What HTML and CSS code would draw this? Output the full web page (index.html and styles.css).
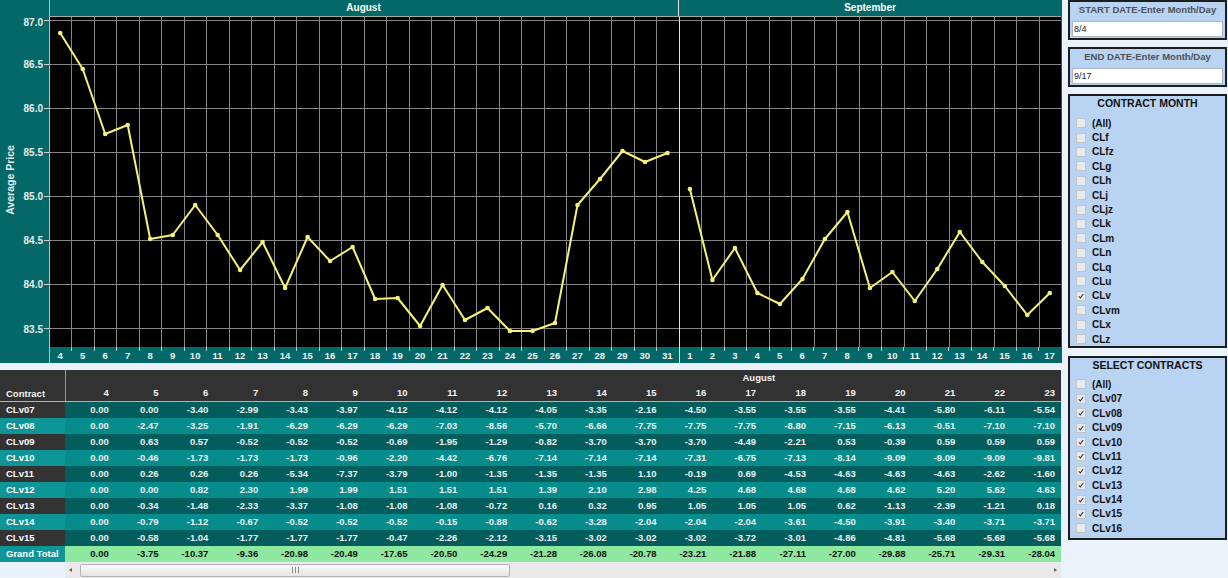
FILE: index.html
```html
<!DOCTYPE html>
<html lang="en">
<head>
<meta charset="utf-8">
<title>Average Price Dashboard</title>
<link rel="stylesheet" href="styles.css">
</head>
<body>
<div class="page">
  <div class="main">
    <div class="chart">
      <div class="corner"></div>
      <div class="months">
        <div class="month aug">August</div>
        <div class="month sep">September</div>
      </div>
      <div class="filler"></div>
      <svg class="yaxis" width="49" height="330" viewBox="0 0 49 330">
        <text class="ytitle" transform="translate(14,163) rotate(-90)" text-anchor="middle">Average Price</text>
        <g class="ylabels" text-anchor="end">
          <text x="43" y="8.5">87.0</text>
          <text x="43" y="51">86.5</text>
          <text x="43" y="95">86.0</text>
          <text x="43" y="139">85.5</text>
          <text x="43" y="183">85.0</text>
          <text x="43" y="227">84.5</text>
          <text x="43" y="271">84.0</text>
          <text x="43" y="315.5">83.5</text>
        </g>
        <path d="M44 3.5H49M44 47.5H49M44 91.5H49M44 135.5H49M44 179.5H49M44 223.5H49M44 267.5H49M44 311.5H49" stroke="#c9d3d3" stroke-width="1"/>
      </svg>
      <svg class="plot" width="1012" height="330" viewBox="0 0 1012 330">
        <defs>
          <marker id="dot" markerWidth="6" markerHeight="6" refX="3" refY="3" markerUnits="userSpaceOnUse">
            <circle cx="3" cy="3" r="2.3" fill="#f7f277"/>
          </marker>
        </defs>
        <rect width="1012" height="330" fill="#000"/>
        <path d="M0 3.5H1012M0 47.5H1012M0 91.5H1012M0 135.5H1012M0 179.5H1012M0 223.5H1012M0 267.5H1012M0 311.5H1012" stroke="#858585" stroke-width="1"/>
        <path d="M22.5 0V330M45.5 0V330M67.5 0V330M90.5 0V330M112.5 0V330M135.5 0V330M157.5 0V330M180.5 0V330M202.5 0V330M225.5 0V330M247.5 0V330M270.5 0V330M292.5 0V330M315.5 0V330M337.5 0V330M360.5 0V330M382.5 0V330M405.5 0V330M427.5 0V330M450.5 0V330M472.5 0V330M495.5 0V330M517.5 0V330M540.5 0V330M562.5 0V330M585.5 0V330M607.5 0V330M652.5 0V330M675.5 0V330M697.5 0V330M720.5 0V330M742.5 0V330M765.5 0V330M787.5 0V330M810.5 0V330M832.5 0V330M855.5 0V330M877.5 0V330M900.5 0V330M922.5 0V330M945.5 0V330M967.5 0V330M990.5 0V330" stroke="#858585" stroke-width="1"/>
        <path d="M0.5 0V330" stroke="#b7bfbf" stroke-width="1"/>
        <path d="M630.5 0V330" stroke="#e2e2e2" stroke-width="1"/>
        <polyline class="series" points="11.2,16 33.7,52 56.2,117 78.7,108 101.2,222 123.7,218 146.2,188 168.7,218 191.1,253 213.6,225 236.1,271 258.6,220 281.1,244 303.6,230 326.1,282 348.6,281 371.1,309 393.6,268 416,303 438.5,291 461,314 483.5,314 506,306 528.5,188 551,162 573.5,134 596,145 618.5,136"/>
        <polyline class="series" points="640.9,172 663.4,263 685.9,231 708.4,276 730.9,287 753.4,262 775.9,222 798.4,195 820.9,271 843.4,255 865.8,284 888.3,252 910.8,215 933.3,245 955.8,269 978.3,298 1000.8,276"/>
      </svg>
      <div class="filler"></div>
      <div class="corner"></div>
      <div class="xaxis">
        <span>4</span><span>5</span><span>6</span><span>7</span><span>8</span><span>9</span><span>10</span><span>11</span><span>12</span><span>13</span><span>14</span><span>15</span><span>16</span><span>17</span><span>18</span><span>19</span><span>20</span><span>21</span><span>22</span><span>23</span><span>24</span><span>25</span><span>26</span><span>27</span><span>28</span><span>29</span><span>30</span><span>31</span><span class="mdiv">1</span><span>2</span><span>3</span><span>4</span><span>5</span><span>6</span><span>7</span><span>8</span><span>9</span><span>10</span><span>11</span><span>12</span><span>13</span><span>14</span><span>15</span><span>16</span><span>17</span>
      </div>
      <div class="filler"></div>
    </div>

    <div class="grid-wrap">
      <table class="pivot">
        <colgroup>
          <col class="c0">
          <col class="cd"><col class="cd"><col class="cd"><col class="cd"><col class="cd"><col class="cd"><col class="cd"><col class="cd"><col class="cd"><col class="cd"><col class="cd"><col class="cd"><col class="cd"><col class="cd"><col class="cd"><col class="cd"><col class="cd"><col class="cd"><col class="cd"><col class="cd">
        </colgroup>
        <thead>
          <tr class="group-row">
            <th class="contract" rowspan="2">Contract</th>
            <th class="group" colspan="20">August</th>
          </tr>
          <tr class="days">
            <th>4</th><th>5</th><th>6</th><th>7</th><th>8</th><th>9</th><th>10</th><th>11</th><th>12</th><th>13</th><th>14</th><th>15</th><th>16</th><th>17</th><th>18</th><th>19</th><th>20</th><th>21</th><th>22</th><th>23</th>
          </tr>
        </thead>
        <tbody>
          <tr class="odd"><th>CLv07</th><td>0.00</td><td>0.00</td><td>-3.40</td><td>-2.99</td><td>-3.43</td><td>-3.97</td><td>-4.12</td><td>-4.12</td><td>-4.12</td><td>-4.05</td><td>-3.35</td><td>-2.16</td><td>-4.50</td><td>-3.55</td><td>-3.55</td><td>-3.55</td><td>-4.41</td><td>-5.80</td><td>-6.11</td><td>-5.54</td></tr>
          <tr class="even"><th>CLv08</th><td>0.00</td><td>-2.47</td><td>-3.25</td><td>-1.91</td><td>-6.29</td><td>-6.29</td><td>-6.29</td><td>-7.03</td><td>-8.56</td><td>-5.70</td><td>-6.66</td><td>-7.75</td><td>-7.75</td><td>-7.75</td><td>-8.80</td><td>-7.15</td><td>-6.13</td><td>-0.51</td><td>-7.10</td><td>-7.10</td></tr>
          <tr class="odd"><th>CLv09</th><td>0.00</td><td>0.63</td><td>0.57</td><td>-0.52</td><td>-0.52</td><td>-0.52</td><td>-0.69</td><td>-1.95</td><td>-1.29</td><td>-0.82</td><td>-3.70</td><td>-3.70</td><td>-3.70</td><td>-4.49</td><td>-2.21</td><td>0.53</td><td>-0.39</td><td>0.59</td><td>0.59</td><td>0.59</td></tr>
          <tr class="even"><th>CLv10</th><td>0.00</td><td>-0.46</td><td>-1.73</td><td>-1.73</td><td>-1.73</td><td>-0.96</td><td>-2.20</td><td>-4.42</td><td>-6.76</td><td>-7.14</td><td>-7.14</td><td>-7.14</td><td>-7.31</td><td>-6.75</td><td>-7.13</td><td>-8.14</td><td>-9.09</td><td>-9.09</td><td>-9.09</td><td>-9.81</td></tr>
          <tr class="odd"><th>CLv11</th><td>0.00</td><td>0.26</td><td>0.26</td><td>0.26</td><td>-5.34</td><td>-7.37</td><td>-3.79</td><td>-1.00</td><td>-1.35</td><td>-1.35</td><td>-1.35</td><td>1.10</td><td>-0.19</td><td>0.69</td><td>-4.53</td><td>-4.63</td><td>-4.63</td><td>-4.63</td><td>-2.62</td><td>-1.60</td></tr>
          <tr class="even"><th>CLv12</th><td>0.00</td><td>0.00</td><td>0.82</td><td>2.30</td><td>1.99</td><td>1.99</td><td>1.51</td><td>1.51</td><td>1.51</td><td>1.39</td><td>2.10</td><td>2.98</td><td>4.25</td><td>4.68</td><td>4.68</td><td>4.68</td><td>4.62</td><td>5.20</td><td>5.62</td><td>4.63</td></tr>
          <tr class="odd"><th>CLv13</th><td>0.00</td><td>-0.34</td><td>-1.48</td><td>-2.33</td><td>-3.37</td><td>-1.08</td><td>-1.08</td><td>-1.08</td><td>-0.72</td><td>0.16</td><td>0.32</td><td>0.95</td><td>1.05</td><td>1.05</td><td>1.05</td><td>0.62</td><td>-1.13</td><td>-2.39</td><td>-1.21</td><td>0.18</td></tr>
          <tr class="even"><th>CLv14</th><td>0.00</td><td>-0.79</td><td>-1.12</td><td>-0.67</td><td>-0.52</td><td>-0.52</td><td>-0.52</td><td>-0.15</td><td>-0.88</td><td>-0.62</td><td>-3.28</td><td>-2.04</td><td>-2.04</td><td>-2.04</td><td>-3.61</td><td>-4.50</td><td>-3.91</td><td>-3.40</td><td>-3.71</td><td>-3.71</td></tr>
          <tr class="odd"><th>CLv15</th><td>0.00</td><td>-0.58</td><td>-1.04</td><td>-1.77</td><td>-1.77</td><td>-1.77</td><td>-0.47</td><td>-2.26</td><td>-2.12</td><td>-3.15</td><td>-3.02</td><td>-3.02</td><td>-3.02</td><td>-3.72</td><td>-3.01</td><td>-4.86</td><td>-4.81</td><td>-5.68</td><td>-5.68</td><td>-5.68</td></tr>
          <tr class="total"><th>Grand Total</th><td>0.00</td><td>-3.75</td><td>-10.37</td><td>-9.36</td><td>-20.98</td><td>-20.49</td><td>-17.65</td><td>-20.50</td><td>-24.29</td><td>-21.28</td><td>-26.08</td><td>-20.78</td><td>-23.21</td><td>-21.88</td><td>-27.11</td><td>-27.00</td><td>-29.88</td><td>-25.71</td><td>-29.31</td><td>-28.04</td></tr>
        </tbody>
      </table>
    </div>

    <div class="hscroll">
      <span class="arrow left"></span>
      <span class="thumb"><span class="grip"></span></span>
      <span class="track-rest"></span>
      <span class="arrow right"></span>
    </div>
  </div>

  <aside class="side">
    <section class="box date">
      <div class="date-title">START DATE-Enter Month/Day</div>
      <input class="date-input" type="text" value="8/4">
    </section>
    <section class="box date">
      <div class="date-title">END DATE-Enter Month/Day</div>
      <input class="date-input" type="text" value="9/17">
    </section>
    <section class="box list">
      <div class="list-title">CONTRACT MONTH</div>
      <ul class="checks">
        <li><span class="cb"></span>(All)</li>
        <li><span class="cb"></span>CLf</li>
        <li><span class="cb"></span>CLfz</li>
        <li><span class="cb"></span>CLg</li>
        <li><span class="cb"></span>CLh</li>
        <li><span class="cb"></span>CLj</li>
        <li><span class="cb"></span>CLjz</li>
        <li><span class="cb"></span>CLk</li>
        <li><span class="cb"></span>CLm</li>
        <li><span class="cb"></span>CLn</li>
        <li><span class="cb"></span>CLq</li>
        <li><span class="cb"></span>CLu</li>
        <li><span class="cb"><svg viewBox="0 0 10 10"><path d="M2.2 5.3 L4.1 7.4 L7.9 2.5"/></svg></span>CLv</li>
        <li><span class="cb"></span>CLvm</li>
        <li><span class="cb"></span>CLx</li>
        <li><span class="cb"></span>CLz</li>
      </ul>
    </section>
    <section class="box list contracts">
      <div class="list-title">SELECT CONTRACTS</div>
      <ul class="checks">
        <li><span class="cb"></span>(All)</li>
        <li><span class="cb"><svg viewBox="0 0 10 10"><path d="M2.2 5.3 L4.1 7.4 L7.9 2.5"/></svg></span>CLv07</li>
        <li><span class="cb"><svg viewBox="0 0 10 10"><path d="M2.2 5.3 L4.1 7.4 L7.9 2.5"/></svg></span>CLv08</li>
        <li><span class="cb"><svg viewBox="0 0 10 10"><path d="M2.2 5.3 L4.1 7.4 L7.9 2.5"/></svg></span>CLv09</li>
        <li><span class="cb"><svg viewBox="0 0 10 10"><path d="M2.2 5.3 L4.1 7.4 L7.9 2.5"/></svg></span>CLv10</li>
        <li><span class="cb"><svg viewBox="0 0 10 10"><path d="M2.2 5.3 L4.1 7.4 L7.9 2.5"/></svg></span>CLv11</li>
        <li><span class="cb"><svg viewBox="0 0 10 10"><path d="M2.2 5.3 L4.1 7.4 L7.9 2.5"/></svg></span>CLv12</li>
        <li><span class="cb"><svg viewBox="0 0 10 10"><path d="M2.2 5.3 L4.1 7.4 L7.9 2.5"/></svg></span>CLv13</li>
        <li><span class="cb"><svg viewBox="0 0 10 10"><path d="M2.2 5.3 L4.1 7.4 L7.9 2.5"/></svg></span>CLv14</li>
        <li><span class="cb"><svg viewBox="0 0 10 10"><path d="M2.2 5.3 L4.1 7.4 L7.9 2.5"/></svg></span>CLv15</li>
        <li><span class="cb"></span>CLv16</li>
      </ul>
    </section>
  </aside>
</div>
</body>
</html>
```

FILE: styles.css
```css
* { box-sizing: border-box; }

html, body {
  margin: 0;
  padding: 0;
}

body {
  background: #eaf2fb;
  font-family: "Liberation Sans", Arial, sans-serif;
  color: #111;
}

.page {
  display: flex;
  align-items: flex-start;
  width: 1228px;
  height: 578px;
  overflow: hidden;
}

.main {
  width: 1062px;
  flex: none;
}

/* ---------- chart ---------- */
.chart {
  display: grid;
  grid-template-columns: 49px 1012px 1px;
  grid-template-rows: 17px 330px 16px;
  background: #046868;
}

.months {
  display: flex;
  border-bottom: 1px solid #9fabab;
  box-shadow: inset 1px 0 0 #b7bfbf;
}

.month {
  flex: 28 1 0;
  text-align: center;
  color: #fff;
  font-weight: bold;
  font-size: 10px;
  line-height: 16px;
}

.month.sep {
  flex: 17 1 0;
  border-left: 1px solid #e2e2e2;
}

.yaxis, .plot {
  display: block;
}

.ytitle {
  fill: #e4ecee;
  font-family: "Liberation Sans", Arial, sans-serif;
  font-weight: bold;
  font-size: 10.5px;
}

.ylabels text {
  fill: #e4ecee;
  font-family: "Liberation Sans", Arial, sans-serif;
  font-weight: bold;
  font-size: 10px;
}

.series {
  fill: none;
  stroke: #f7f277;
  stroke-width: 2;
  stroke-linejoin: round;
  marker-start: url(#dot);
  marker-mid: url(#dot);
  marker-end: url(#dot);
}

.xaxis {
  display: flex;
  box-shadow: inset 1px 0 0 #b7bfbf;
}

.xaxis span {
  flex: 1 1 0;
  position: relative;
  text-align: center;
  color: #eef4f4;
  font-weight: bold;
  font-size: 9.5px;
  line-height: 17px;
}

.xaxis span + span::before {
  content: "";
  position: absolute;
  left: 0;
  top: 0;
  width: 1px;
  height: 4px;
  background: #c3cccc;
}

.xaxis span.mdiv::before {
  height: 16px;
  background: #e2e2e2;
}

/* ---------- pivot table ---------- */
.grid-wrap {
  margin-top: 7px;
  width: 1062px;
  overflow: hidden;
}

.pivot {
  border-collapse: collapse;
  table-layout: fixed;
  width: 1061px;
  font-size: 9.5px;
  font-weight: bold;
}

.pivot col.c0 { width: 65px; }
.pivot col.cd { width: 49.8px; }

.pivot th,
.pivot td {
  padding: 0;
  height: 16px;
  line-height: 16px;
  white-space: nowrap;
  overflow: hidden;
}

.pivot thead th {
  background: #323232;
  color: #f2f2f2;
}

.pivot th.contract {
  text-align: left;
  vertical-align: bottom;
  padding-left: 6px;
  font-size: 9.5px;
  line-height: 14px;
  border-right: 1px solid #9a9a9a;
  border-bottom: 1px solid #b5b5b5;
}

.pivot th.group {
  text-align: left;
  padding-left: 677px;
}

.pivot tr.days th {
  text-align: right;
  padding-right: 6px;
  height: 15px;
  line-height: 14px;
  border-bottom: 1px solid #b5b5b5;
}

.pivot tbody th {
  text-align: left;
  padding-left: 6px;
  color: #fff;
}

.pivot tbody td {
  text-align: right;
  padding-right: 6px;
  color: #e9f1f1;
}

.pivot tr.odd th { background: #333333; }
.pivot tr.odd td { background: #035d5d; }
.pivot tr.even th { background: #0e9595; }
.pivot tr.even td { background: #078c8c; }
.pivot tr.total th { background: #0e9595; color: #fff; }
.pivot tr.total td { background: #8fe8a0; color: #111; }

/* ---------- scrollbar ---------- */
.hscroll {
  display: flex;
  align-items: center;
  margin: 1px 0 0 65px;
  width: 996px;
  height: 15px;
  background: #e9e9e9;
}

.arrow {
  width: 12px;
  height: 15px;
  flex: none;
  position: relative;
}

.arrow.left::after,
.arrow.right::after {
  content: "";
  position: absolute;
  top: 5px;
  width: 0;
  height: 0;
  border-top: 2.5px solid transparent;
  border-bottom: 2.5px solid transparent;
}

.arrow.left::after {
  left: 4px;
  border-right: 3px solid #606060;
}

.arrow.right::after {
  right: 4px;
  border-left: 3px solid #606060;
}

.thumb {
  margin-left: 3px;
  width: 430px;
  height: 13px;
  flex: none;
  display: flex;
  align-items: center;
  justify-content: center;
  border: 1px solid #b4b4b4;
  border-radius: 2px;
  background: linear-gradient(#fbfbfb, #e4e4e4);
}

.grip {
  width: 7px;
  height: 6px;
  margin-left: 0;
  background: repeating-linear-gradient(90deg, #8a8a8a 0 1px, transparent 1px 3px);
}

.track-rest { flex: 1; }

/* ---------- side panel ---------- */
.side {
  width: 159px;
  margin-left: 6px;
  flex: none;
  display: flex;
  flex-direction: column;
  gap: 7px;
}

.box {
  border: 2px solid #1d1d1d;
  background: #b9d3f3;
}

.box.date {
  height: 40px;
  padding-top: 1px;
}

.date-title {
  text-align: center;
  font-weight: bold;
  font-size: 9.5px;
  line-height: 14px;
  color: #4c5158;
}

.date-input {
  display: block;
  width: 151px;
  height: 16px;
  margin: 4px 0 0 2px;
  padding: 0 1px;
  border: 1px solid #a9b7c6;
  background: #fff;
  font: 9px "Liberation Sans", Arial, sans-serif;
  color: #222;
  outline: none;
}

.list-title {
  text-align: center;
  font-weight: bold;
  font-size: 10.5px;
  line-height: 14px;
  color: #111;
  padding-bottom: 6px;
}

.box.contracts {
  margin-top: 1px;
  padding-bottom: 2px;
}

.box.contracts .list-title {
  padding-bottom: 5px;
}

.checks {
  list-style: none;
  margin: 0;
  padding: 0;
}

.checks li {
  display: flex;
  align-items: center;
  height: 14.4px;
  font-weight: bold;
  font-size: 10px;
  color: #111;
}

.cb {
  width: 10px;
  height: 10px;
  margin: 0 6px 0 6px;
  flex: none;
  border: 1px solid #c4c4c4;
  background: #e9e9e9;
  display: flex;
}

.cb svg {
  width: 8px;
  height: 8px;
}

.cb svg path {
  fill: none;
  stroke: #2b3554;
  stroke-width: 1.3;
}
```
